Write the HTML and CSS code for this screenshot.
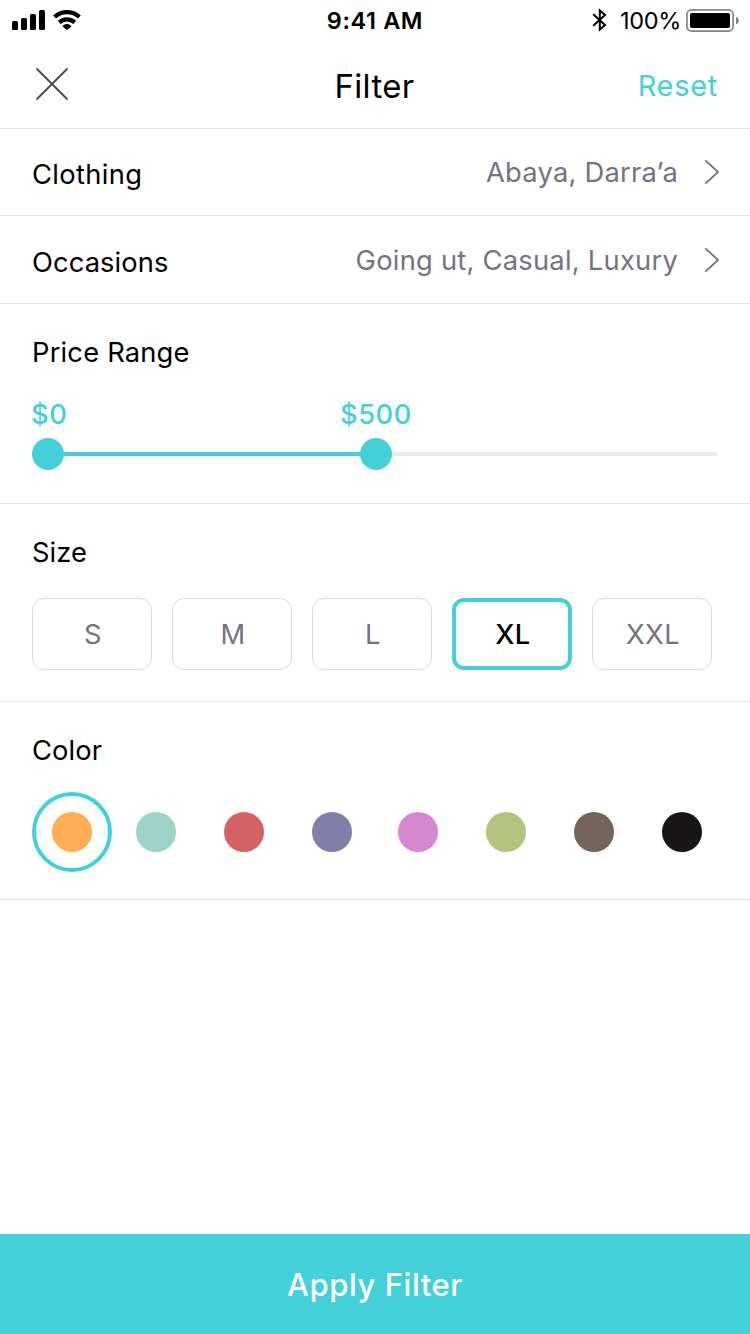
FILE: index.html
```html
<!DOCTYPE html>
<html lang="en">
<head>
<meta charset="utf-8">
<title>Filter</title>
<link rel="stylesheet" href="styles.css">
</head>
<body>
<div class="screen">
  <div class="status">
    <div class="status-left">
      <svg width="34" height="20" viewBox="0 0 34 20"><rect x="0" y="11" width="6" height="9" rx="1.6"/><rect x="9" y="8" width="6" height="12" rx="1.6"/><rect x="18" y="4" width="6" height="16" rx="1.6"/><rect x="27" y="0" width="6" height="20" rx="1.6"/></svg>
      <svg width="28" height="20" viewBox="0 0 28 20"><g fill="none" stroke="#000" stroke-width="4.2"><path d="M1.6 7.1A17.8 17.8 0 0 1 26.4 7.1"/><path d="M6.2 12.4A11.4 11.4 0 0 1 21.8 12.4"/></g><path d="M9.7 16.4Q9.5 15.8 10.4 15.3Q14 12.5 17.6 15.3Q18.5 15.8 18.3 16.4L14.8 19.6Q14 20.3 13.2 19.6Z"/></svg>
    </div>
    <div class="time">9:41 AM</div>
    <div class="status-right">
      <svg class="bluetooth" width="16" height="24" viewBox="0 0 16 24"><path d="M1.2 6.3L13 17L7.8 21.5V2.5L13 7L1.2 17.7" fill="none" stroke="#000" stroke-width="2"/></svg>
      <span class="percent">100%</span>
      <svg width="54" height="24" viewBox="0 0 54 24"><rect x=".9" y=".9" width="46.2" height="21.2" rx="4.6" fill="#fff" stroke="#868686" stroke-width="1.7"/><rect x="4" y="4" width="40" height="15" rx="2"/><path d="M50 7.8Q53 9 53 11.6T50 15.6Z" fill="#868686"/></svg>
    </div>
  </div>
  <header class="header">
    <svg class="close" width="34" height="34" viewBox="0 0 34 34"><path d="M1.5 1.5L32.5 32.5M32.5 1.5L1.5 32.5" fill="none" stroke="#48484a" stroke-width="1.8"/></svg>
    <h1 class="title">Filter</h1>
    <span class="reset">Reset</span>
  </header>
  <div class="row">
    <span class="label clothing">Clothing</span>
    <span class="value">Abaya, Darra’a</span>
    <svg class="chevron" width="16" height="26" viewBox="0 0 16 26"><path d="M1.3 1.3L14 13L1.3 24.7"/></svg>
  </div>
  <div class="row row-tall">
    <span class="label">Occasions</span>
    <span class="value">Going ut, Casual, Luxury</span>
    <svg class="chevron" width="16" height="26" viewBox="0 0 16 26"><path d="M1.3 1.3L14 13L1.3 24.7"/></svg>
  </div>
  <section class="section price">
    <h2 class="label price-label">Price Range</h2>
    <div class="prices"><span class="low">$0</span><span class="high">$500</span></div>
    <div class="slider"><i class="knob"></i><i class="filled"></i><i class="knob"></i><i class="rest"></i></div>
  </section>
  <section class="section size">
    <h2 class="label">Size</h2>
    <div class="sizes">
      <span class="option">S</span><span class="option">M</span><span class="option">L</span><span class="option selected">XL</span><span class="option">XXL</span>
    </div>
  </section>
  <section class="section color">
    <h2 class="label">Color</h2>
    <div class="swatches">
      <span class="ring"><i class="dot orange"></i></span><i class="dot mint"></i><i class="dot red"></i><i class="dot indigo"></i><i class="dot pink"></i><i class="dot green"></i><i class="dot brown"></i><i class="dot black"></i>
    </div>
  </section>
  <div class="apply">Apply Filter</div>
</div>
</body>
</html>
```
FILE: styles.css
```css
* { box-sizing: border-box; }
body { margin: 0; background: #fff; font-family: Inter, "Liberation Sans", sans-serif; color: #000; }
svg { display: block; flex: none; }
.screen { width: 750px; height: 1334px; display: flex; flex-direction: column; }
.status { height: 40px; display: grid; grid-template-columns: 1fr auto 1fr; padding: 0 10px 0 12px; line-height: 41px; }
.status-left { display: flex; gap: 7px; padding-top: 10px; }
.time { font-size: 23.5px; font-weight: 600; letter-spacing: .6px; padding-right: 2px; }
.status-right { display: flex; justify-content: flex-end; }
.bluetooth { margin: 8px 12px 0 0; }
.percent { font-size: 23.5px; letter-spacing: -.3px; margin-right: 5px; }
.status-right svg:last-child { margin-top: 9px; }
.header { height: 89px; border-bottom: 1px solid #e9e9eb; display: grid; grid-template-columns: 1fr auto 1fr; padding: 0 32px 0 35px; }
.close { margin-top: 27px; }
.title { margin: 0; padding-right: 4px; font-size: 33px; font-weight: 400; line-height: 92px; letter-spacing: .3px; }
.reset { justify-self: end; font-size: 29px; line-height: 91px; letter-spacing: .7px; color: #43d0d9; }
.row { height: 87px; border-bottom: 1px solid #e9e9eb; padding: 0 30px 0 32px; display: flex; align-items: center; }
.row-tall { height: 88px; }
.label { margin: 0; font-size: 27.3px; font-weight: 400; line-height: 42px; letter-spacing: .1px; }
.clothing { letter-spacing: .35px; }
.price-label { letter-spacing: .2px; }
.row .label { padding-top: 6px; }
.value { margin-left: auto; margin-right: 26px; font-size: 27.3px; line-height: 40px; padding-top: 2px; letter-spacing: .25px; color: #757283; }
.chevron path { fill: none; stroke: #757283; stroke-width: 1.8; }
.section { border-bottom: 1px solid #e9e9eb; padding: 28px 32px 0; }
.price { height: 200px; }
.size, .color { height: 198px; }
.prices { display: flex; margin-top: 20px; font-size: 27.3px; font-weight: 500; line-height: 42px; letter-spacing: .5px; color: #43d0d9; }
.low { width: 308px; margin-left: -1px; }
.high { margin-left: 1px; }
.slider { display: flex; align-items: center; height: 32px; margin-top: 2px; }
.knob { width: 32px; height: 32px; border-radius: 50%; background: #43d0d9; }
.filled { width: 296px; height: 4px; background: #43d0d9; }
.rest { flex: 1; height: 4px; border-radius: 0 2px 2px 0; background: #ececec; }
.sizes { display: flex; gap: 20px; margin-top: 24px; }
.option { width: 120px; height: 72px; border: 1px solid #d9d9d9; border-radius: 12px; display: flex; align-items: center; justify-content: center; padding-left: 2px; font-size: 27.3px; letter-spacing: .5px; color: #757283; }
.selected { border: 4px solid #43d0d9; color: #000; font-weight: 500; }
.swatches { display: flex; align-items: center; gap: 48px; margin-top: 20px; }
.ring { width: 80px; height: 80px; border: 4px solid #43d0d9; border-radius: 50%; display: flex; align-items: center; justify-content: center; margin-right: -24px; }
.dot { width: 40px; height: 40px; border-radius: 50%; flex: none; }
.orange { background: #ffad55; }
.mint { background: #9bd3ca; }
.red { background: #d46164; }
.indigo { background: #827eaa; }
.pink { background: #d388cf; margin-left: -2px; }
.green { background: #b4c47f; }
.brown { background: #75645b; }
.black { background: #171516; }
.apply { margin-top: auto; height: 100px; background: #43d0d9; color: #fff; font-size: 31px; font-weight: 500; line-height: 101px; letter-spacing: .55px; text-align: center; }
```
